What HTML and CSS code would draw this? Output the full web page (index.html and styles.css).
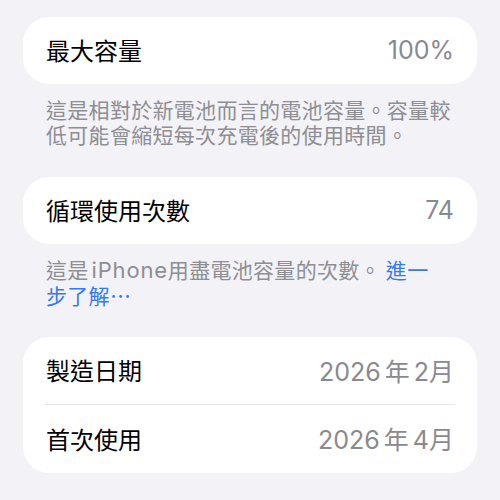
FILE: index.html
```html
<!DOCTYPE html>
<html lang="zh-Hant">
<head>
  <meta charset="UTF-8">
  <title>電池健康度</title>
  <link rel="stylesheet" href="styles.css">
</head>
<body>

  <div class="group">
    <div class="row">
      <span class="label">最大容量</span>
      <span class="value">100%</span>
    </div>
  </div>
  <p class="note note_first">這是相對於新電池而言的電池容量。容量較低可能會縮短每次充電後的使用時間。</p>

  <div class="group">
    <div class="row">
      <span class="label">循環使用次數</span>
      <span class="value">74</span>
    </div>
  </div>
  <p class="note note_second">這是<span class="latin">iPhone</span>用盡電池容量的次數。 <a href="#" class="more">進一步了解⋯</a></p>

  <div class="group">
    <div class="row">
      <span class="label">製造日期</span>
      <span class="value">2026 年 2月</span>
    </div>
    <div class="divider"></div>
    <div class="row row_last">
      <span class="label">首次使用</span>
      <span class="value">2026 年 4月</span>
    </div>
  </div>

</body>
</html>
```

FILE: styles.css
```css
body {
  margin: 0;
  padding: 17px 23px 0;
  background: #f2f2f7;
  font-family: "Inter", "Noto Sans CJK TC", sans-serif;
}

.group {
  background: #fff;
  border-radius: 26px;
}

.row {
  height: 67px;
  padding: 0 23px;
  display: flex;
  align-items: center;
  justify-content: space-between;
}

.row_last {
  height: 68px;
}

.label {
  font-family: "Noto Sans CJK TC", sans-serif;
  font-size: 24px;
  color: #000;
  margin-top: -2px;
}

.value {
  font-size: 25px;
  color: #8a8a8e;
  word-spacing: -3px;
  margin-top: -2px;
}

.divider {
  height: 1px;
  margin: 0 22px;
  background: #e5e5ea;
}

.note {
  margin: 0;
  padding: 13px 23px 0;
  font-family: "Noto Sans CJK TC", sans-serif;
  font-size: 21px;
  line-height: 25px;
  letter-spacing: 0.3px;
  color: #8e8e93;
}

.note_first {
  margin-bottom: 30px;
}

.note_second {
  padding-right: 40px;
  margin-bottom: 29px;
}

.latin {
  font-family: "Inter", sans-serif;
  font-size: 22px;
  letter-spacing: 0.8px;
  margin-left: 3px;
}

.more {
  color: #3478f6;
  text-decoration: none;
}
```
